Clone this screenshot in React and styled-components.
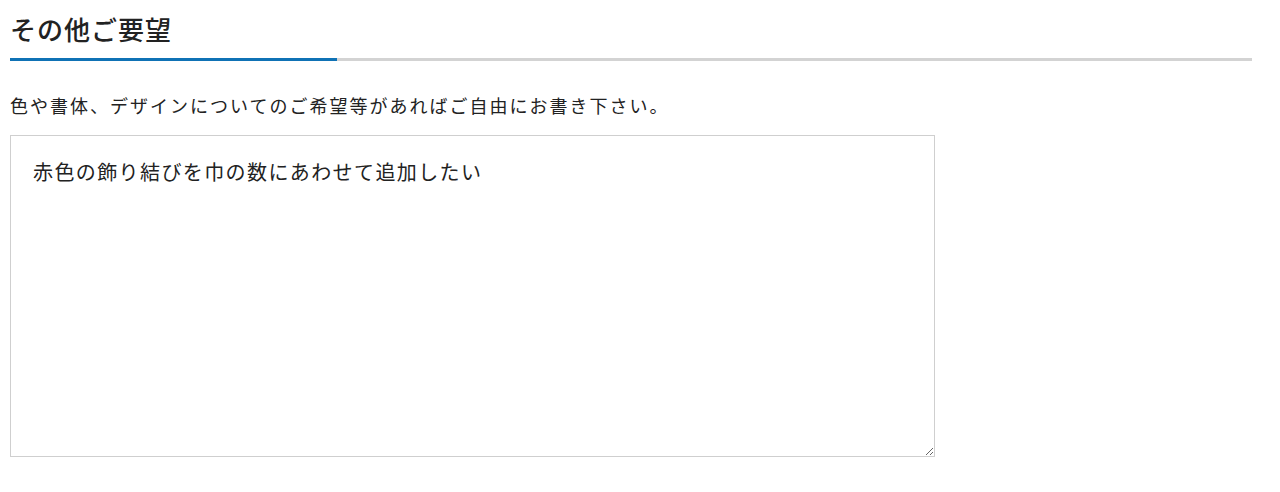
import React, { useEffect, useRef } from "react";
import styled, { createGlobalStyle } from "styled-components";

const GlobalStyle = createGlobalStyle`
  html, body { margin: 0; padding: 0; background: #fff; }
  body {
    font-family: "Noto Sans CJK JP", "Noto Sans", sans-serif;
    color: #222;
  }
`;

const Section = styled.section`
  padding: 11px 28px 0 10px;
  display: flex;
  flex-direction: column;
`;

const Heading = styled.h2`
  margin: 0;
  font-size: 26px;
  font-weight: 500;
  line-height: 36px;
  color: #222;
  letter-spacing: 1px;
`;

const Rule = styled.div`
  margin-top: 11px;
  height: 3px;
  background: #d3d3d3;
  display: flex;
`;

const RuleAccent = styled.div`
  width: 327px;
  height: 100%;
  background: #0f72b5;
`;

const Lead = styled.p`
  margin: 31px 0 0;
  font-size: 18px;
  line-height: 26px;
  letter-spacing: 2px;
  color: #222;
`;

const TextArea = styled.textarea`
  margin-top: 17px;
  width: 925px;
  height: 322px;
  box-sizing: border-box;
  border: 1px solid #cfcfcf;
  border-radius: 0;
  padding: 20px 22px;
  font-family: "Noto Sans CJK JP", "Noto Sans", sans-serif;
  font-size: 20px;
  line-height: 32px;
  letter-spacing: 1.4px;
  color: #222;
  background: #fff;
  outline: none;
  resize: both;
  caret-color: #222;
`;

export default function App() {
  const ref = useRef(null);
  useEffect(() => {
    const el = ref.current;
    if (el) {
      el.focus();
      const n = el.value.length;
      el.setSelectionRange(n, n);
    }
  }, []);
  return (
    <>
      <GlobalStyle />
      <Section>
        <Heading>その他ご要望</Heading>
        <Rule>
          <RuleAccent />
        </Rule>
        <Lead>色や書体、デザインについてのご希望等があればご自由にお書き下さい。</Lead>
        <TextArea
          ref={ref}
          defaultValue="赤色の飾り結びを巾の数にあわせて追加したい"
        />
      </Section>
    </>
  );
}
